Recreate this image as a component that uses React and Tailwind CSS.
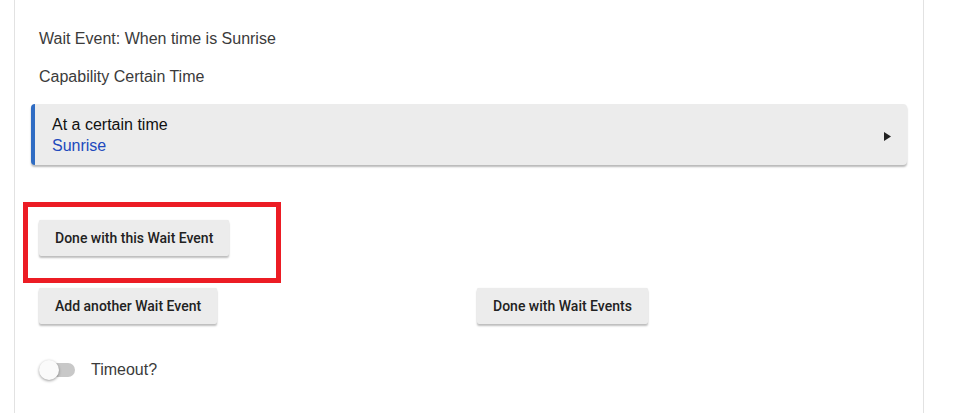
import React from "react";

const BTN =
  "h-9 px-4 rounded-[2px] bg-[#ececec] text-[14px] font-medium text-[#222] shadow-[0_2px_2px_rgba(0,0,0,0.25),0_0_1px_rgba(0,0,0,0.12)] font-['Roboto',sans-serif]";

const Toggle = () => (
  <div className="relative w-9 h-5">
    <div className="absolute left-[2px] top-[3px] w-[34px] h-[14px] rounded-full bg-[#c8c8c8]" />
    <div className="absolute left-0 top-0 w-5 h-5 rounded-full bg-[#fafafa] shadow-[0_1px_3px_rgba(0,0,0,0.4)]" />
  </div>
);

export default function App() {
  return (
    <div className="min-h-screen bg-white pl-[14px] font-['Liberation_Sans',Arial,sans-serif]">
      <div className="w-[910px] h-[413px] border-x border-[#e2e2e2] px-4 pt-[27px]">
        <div className="px-2 text-[16px] leading-6 text-[#3b3b3b]">Wait Event: When time is Sunrise</div>
        <div className="mt-[14px] px-2 text-[16px] leading-6 text-[#3b3b3b]">Capability Certain Time</div>

        <div className="mt-[15px] h-[61px] flex items-center rounded-[4px] border-l-4 border-[#2f6cc3] bg-[#ececec] shadow-[0_2px_2px_rgba(0,0,0,0.28)]">
          <div className="flex-1 pl-[17px] text-[16px] leading-[21px]">
            <div className="text-[#111]">At a certain time</div>
            <div className="text-[#2149bd]">Sunrise</div>
          </div>
          <svg className="mr-[16px] mt-[3px]" width="7" height="9" viewBox="0 0 7 9">
            <path d="M0 0 L7 4.5 L0 9 Z" fill="#222" />
          </svg>
        </div>

        <div className="relative mt-[55px] px-2">
          <div className="absolute left-[-8px] top-[-18px] w-[258px] h-[81px] border-[5px] border-[#ec1c24]" />
          <button className={BTN}>Done with this Wait Event</button>
        </div>

        <div className="mt-8 grid grid-cols-2">
          <div className="px-2">
            <button className={BTN}>Add another Wait Event</button>
          </div>
          <div className="px-2">
            <button className={BTN}>Done with Wait Events</button>
          </div>
        </div>

        <div className="mt-[34px] px-2 flex items-center gap-4">
          <Toggle />
          <span className="text-[16px] leading-6 text-[#3b3b3b]">Timeout?</span>
        </div>
      </div>
    </div>
  );
}
